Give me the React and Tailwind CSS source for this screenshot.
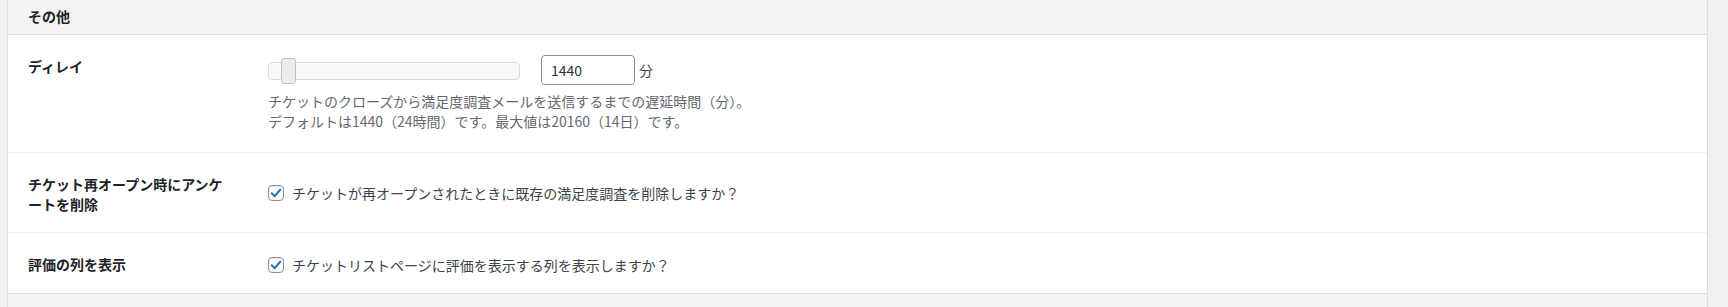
import React from "react";

const font = { fontFamily: '"Noto Sans CJK JP", "Noto Sans", sans-serif' };

function Check() {
  return (
    <span className="relative flex h-[16px] w-[16px] shrink-0 items-center justify-center rounded-[4px] border border-[#8c8f94] bg-white shadow-[inset_0_1px_2px_rgba(0,0,0,0.1)]">
      <svg viewBox="0 0 16 16" className="h-[14px] w-[14px]">
        <path d="M3.2 8.3 L6.6 11.6 L12.9 4.2" fill="none" stroke="#2271b1" strokeWidth="2.4" strokeLinecap="round" strokeLinejoin="round" />
      </svg>
    </span>
  );
}

export default function App() {
  return (
    <div className="flex h-[307px] w-[1728px] overflow-hidden bg-[#f0f0f1] text-[14px]" style={font}>
      <div className="ml-[7px] flex w-[1701px] shrink-0 flex-col border-x border-[#dcdcde]">
        <div className="flex h-[35px] shrink-0 items-center border-b border-[#dcdcde] bg-[#f3f3f3] pl-[20px] pb-[3px] font-bold leading-[20px] text-[#1d2327]">
          その他
        </div>

        <div className="flex border-b border-[#f0f0f1] bg-white">
          <div className="w-[260px] shrink-0 pl-[20px] pr-[40px] pt-[21px] font-bold leading-[20px] text-[#1d2327]">
            ディレイ
          </div>
          <div className="flex flex-col pt-[20px] pb-[21px]">
            <div className="flex items-center">
              <div className="relative mt-[2px] h-[18px] w-[252px] rounded-[4px] border border-[#dcdcde] bg-[#f9f9f9]">
                <div className="absolute left-[12px] top-[-5px] h-[26px] w-[15px] rounded-[3px] border border-[#c3c4c7] bg-[#ececec]" />
              </div>
              <div className="ml-[21px] flex h-[30px] w-[94px] items-center rounded-[4px] border border-[#8c8f94] bg-white pl-[9px] leading-[20px] text-[#2c3338]">
                1440
              </div>
              <span className="ml-[4px] leading-[20px] text-[#3c434a]">分</span>
            </div>
            <p className="mt-[6px] leading-[20px] text-[#646970]">
              チケットのクローズから満足度調査メールを送信するまでの遅延時間（分）。
            </p>
            <p className="leading-[20px] text-[#646970]">
              デフォルトは1440（24時間）です。最大値は20160（14日）です。
            </p>
          </div>
        </div>

        <div className="flex border-b border-[#f0f0f1] bg-white">
          <div className="w-[260px] shrink-0 pl-[20px] pr-[40px] pt-[21px] pb-[18px] font-bold leading-[20px] text-[#1d2327]">
            チケット再オープン時にアンケートを削除
          </div>
          <div className="flex items-center gap-[8px] self-center pt-[1px] leading-[20px] text-[#3c434a]">
            <Check />
            <span>チケットが再オープンされたときに既存の満足度調査を削除しますか？</span>
          </div>
        </div>

        <div className="flex border-b border-[#dcdcde] bg-white">
          <div className="w-[260px] shrink-0 pl-[20px] pr-[40px] pt-[21px] pb-[19px] font-bold leading-[20px] text-[#1d2327]">
            評価の列を表示
          </div>
          <div className="flex items-center gap-[8px] self-center pt-[3px] leading-[20px] text-[#3c434a]">
            <Check />
            <span>チケットリストページに評価を表示する列を表示しますか？</span>
          </div>
        </div>

        <div className="flex-1 bg-[#f3f3f3] pl-[20px] pt-[10px] font-bold leading-[20px] text-[#1d2327]">
          アンケート設定
        </div>
      </div>
    </div>
  );
}
